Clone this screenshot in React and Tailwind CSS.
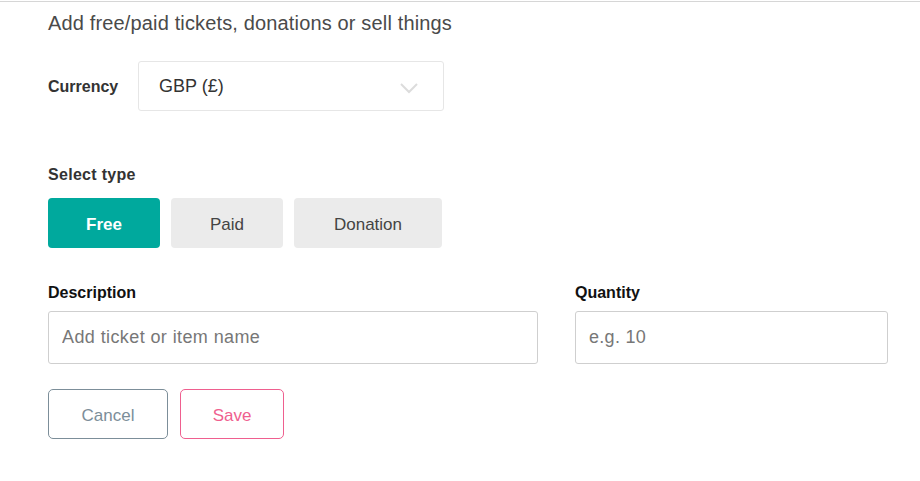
import { useState } from 'react';

const TYPES = ['Free', 'Paid', 'Donation'];

const App = () => {
  const [type, setType] = useState('Free');

  return (
    <div className="min-h-[481px] bg-white font-['Liberation_Sans',Arial,sans-serif]">
      <div className="mt-px border-t border-[#d6d6d6]"></div>
      <div className="pl-12 pr-8">
        {/* Intro */}
        <p className="mt-[7px] text-[20px] leading-7 tracking-[0.15px] text-[#4a4a4a]">
          Add free/paid tickets, donations or sell things
        </p>

        {/* Currency */}
        <div className="mt-[24px] flex items-center">
          <span className="w-[90px] pt-px text-[16px] font-bold text-[#333]">Currency</span>
          <button className="flex h-[50px] w-[306px] items-center justify-between rounded-[3px] border border-[#e6e6e6] pl-5 pr-6 text-[18px] text-[#333]">
            GBP (£)
            <svg className="mt-1" width="20" height="12" viewBox="0 0 20 12" fill="none">
              <path d="M2 2l8 8 8-8" stroke="#dcdcdc" strokeWidth="2" />
            </svg>
          </button>
        </div>

        {/* Select type */}
        <p className="mt-[54px] text-[16px] font-bold leading-5 tracking-[0.3px] text-[#333]">Select type</p>
        <div className="mt-[13px] flex gap-[11px]">
          {TYPES.map((t) => (
            <button
              key={t}
              onClick={() => setType(t)}
              className={
                t === type
                  ? 'h-[50px] w-[112px] rounded-[4px] bg-[#00a99d] pt-[3px] text-[17px] font-bold text-white'
                  : t === 'Donation'
                  ? 'h-[50px] w-[148px] rounded-[4px] bg-[#ebebeb] pt-[3px] text-[17px] text-[#444]'
                  : 'h-[50px] w-[112px] rounded-[4px] bg-[#ebebeb] pt-[3px] text-[17px] text-[#444]'
              }
            >
              {t}
            </button>
          ))}
        </div>

        {/* Description / Quantity */}
        <div className="mt-[35px] flex gap-[37px]">
          <div className="w-[490px] shrink-0">
            <label className="block text-[16px] font-bold leading-5 text-[#111]">Description</label>
            <input
              placeholder="Add ticket or item name"
              className="mt-2 h-[53px] w-full rounded-[3px] border border-[#cfcfcf] px-[13px] text-[18px] tracking-[0.4px] text-[#333] outline-none placeholder:text-[#777]"
            />
          </div>
          <div className="flex-1">
            <label className="block text-[16px] font-bold leading-5 text-[#111]">Quantity</label>
            <input
              placeholder="e.g. 10"
              className="mt-2 h-[53px] w-full rounded-[3px] border border-[#cfcfcf] px-[13px] text-[18px] tracking-[0.3px] text-[#333] outline-none placeholder:text-[#777]"
            />
          </div>
        </div>

        {/* Actions */}
        <div className="mt-[25px] flex gap-[12px]">
          <button className="h-[50px] w-[120px] rounded-[5px] border border-[#7c8e99] pt-[3px] text-[17px] text-[#7c8e99]">
            Cancel
          </button>
          <button className="h-[50px] w-[104px] rounded-[5px] border border-[#ef5f8f] pt-[3px] text-[17px] text-[#ef5f8f]">
            Save
          </button>
        </div>
      </div>
    </div>
  );
};

export default App;
